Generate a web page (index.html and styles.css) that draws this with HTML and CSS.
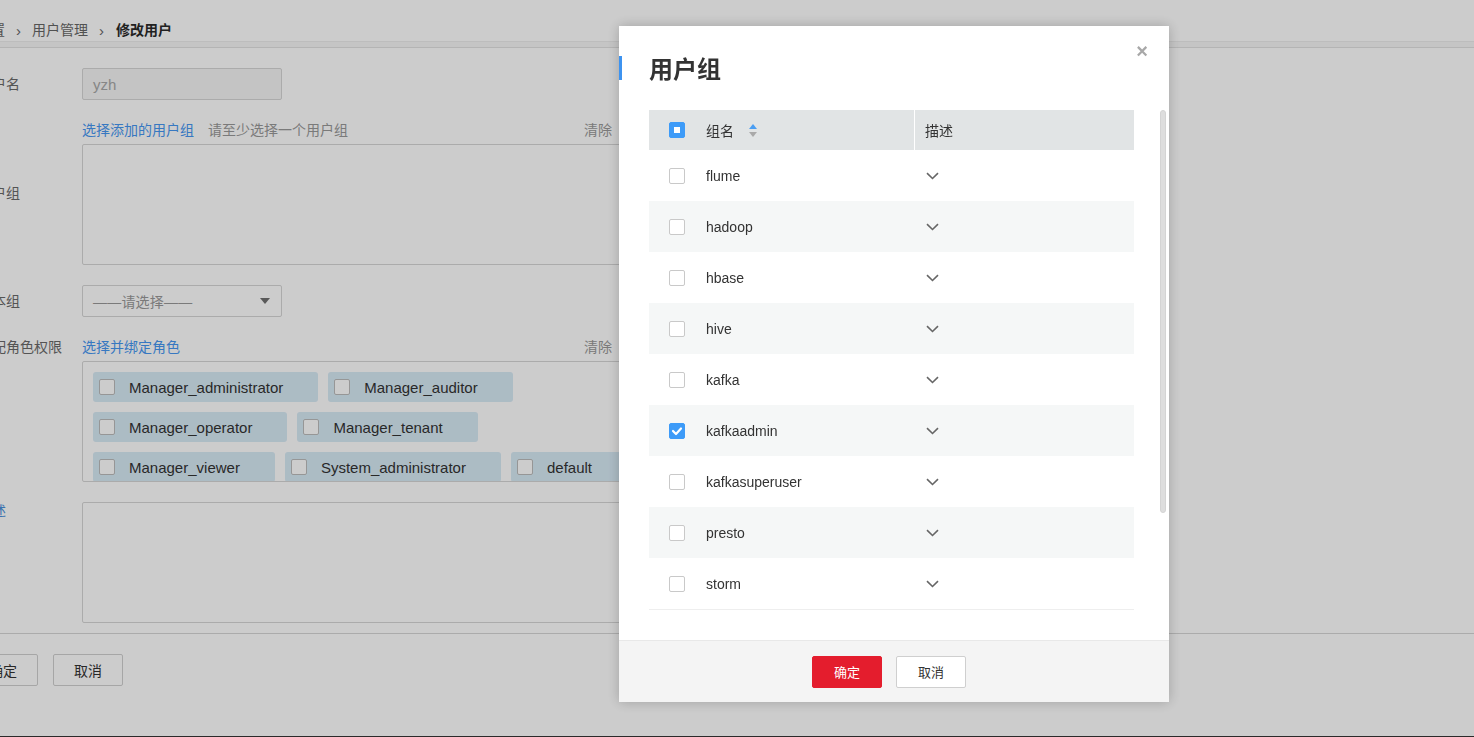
FILE: index.html
```html
<!DOCTYPE html>
<html lang="zh">
<head>
<meta charset="utf-8">
<title>修改用户</title>
<link rel="stylesheet" href="styles.css">
</head>
<body>
<div class="page">
  <div class="crumb">
    <span class="crumb-item first">系统设置</span>
    <span class="crumb-sep">›</span>
    <span class="crumb-item">用户管理</span>
    <span class="crumb-sep">›</span>
    <span class="crumb-item current">修改用户</span>
  </div>
  <div class="crumb-band"></div>

  <div class="form">
    <div class="row row-center">
      <div class="label">用户名</div>
      <div class="field"><div class="input disabled">yzh</div></div>
    </div>

    <div class="row row-center">
      <div class="label">用户组</div>
      <div class="field">
        <div class="field-head"><span class="link">选择添加的用户组</span><span class="hint">请至少选择一个用户组</span><span class="clear">清除</span></div>
        <div class="box"></div>
      </div>
    </div>

    <div class="row row-center">
      <div class="label">基本组</div>
      <div class="field"><div class="input select"><span class="hint">——请选择——</span><span class="caret"></span></div></div>
    </div>

    <div class="row">
      <div class="label">分配角色权限</div>
      <div class="field">
        <div class="field-head"><span class="link">选择并绑定角色</span><span class="clear">清除</span></div>
        <div class="box tags">
          <span class="tag"><span class="cb"></span>Manager_administrator</span>
          <span class="tag"><span class="cb"></span>Manager_auditor</span>
          <span class="tag"><span class="cb"></span>Manager_operator</span>
          <span class="tag"><span class="cb"></span>Manager_tenant</span>
          <span class="tag"><span class="cb"></span>Manager_viewer</span>
          <span class="tag"><span class="cb"></span>System_administrator</span>
          <span class="tag"><span class="cb"></span>default</span>
        </div>
      </div>
    </div>

    <div class="row row-desc">
      <div class="label label-link">描述</div>
      <div class="field"><div class="box"></div></div>
    </div>
  </div>
  <div class="divider"></div>
  <div class="actions">
    <span class="btn">确定</span>
    <span class="btn">取消</span>
  </div>
</div>

<div class="mask"></div>
<div class="bottom-line"></div>

<div class="modal">
  <div class="modal-head">
    <h2 class="modal-title">用户组</h2>
    <span class="modal-close">×</span>
  </div>
  <div class="modal-body">
    <table class="grid">
      <thead>
        <tr>
          <th class="col-name"><span class="name-cell"><span class="check indeterminate"></span>组名<span class="sort"><span class="up"></span><span class="down"></span></span></span></th>
          <th class="col-desc">描述</th>
        </tr>
      </thead>
      <tbody>
        <tr><td><span class="name-cell"><span class="check"></span>flume</span></td><td class="desc"><svg class="chev" width="13" height="8" viewBox="0 0 13 8"><polyline points="1,1.2 6.5,6.5 12,1.2"/></svg></td></tr>
        <tr><td><span class="name-cell"><span class="check"></span>hadoop</span></td><td class="desc"><svg class="chev" width="13" height="8" viewBox="0 0 13 8"><polyline points="1,1.2 6.5,6.5 12,1.2"/></svg></td></tr>
        <tr><td><span class="name-cell"><span class="check"></span>hbase</span></td><td class="desc"><svg class="chev" width="13" height="8" viewBox="0 0 13 8"><polyline points="1,1.2 6.5,6.5 12,1.2"/></svg></td></tr>
        <tr><td><span class="name-cell"><span class="check"></span>hive</span></td><td class="desc"><svg class="chev" width="13" height="8" viewBox="0 0 13 8"><polyline points="1,1.2 6.5,6.5 12,1.2"/></svg></td></tr>
        <tr><td><span class="name-cell"><span class="check"></span>kafka</span></td><td class="desc"><svg class="chev" width="13" height="8" viewBox="0 0 13 8"><polyline points="1,1.2 6.5,6.5 12,1.2"/></svg></td></tr>
        <tr><td><span class="name-cell"><span class="check checked"><svg width="12" height="10" viewBox="0 0 12 10"><polyline points="2,5 5,8 10,2.5"/></svg></span>kafkaadmin</span></td><td class="desc"><svg class="chev" width="13" height="8" viewBox="0 0 13 8"><polyline points="1,1.2 6.5,6.5 12,1.2"/></svg></td></tr>
        <tr><td><span class="name-cell"><span class="check"></span>kafkasuperuser</span></td><td class="desc"><svg class="chev" width="13" height="8" viewBox="0 0 13 8"><polyline points="1,1.2 6.5,6.5 12,1.2"/></svg></td></tr>
        <tr><td><span class="name-cell"><span class="check"></span>presto</span></td><td class="desc"><svg class="chev" width="13" height="8" viewBox="0 0 13 8"><polyline points="1,1.2 6.5,6.5 12,1.2"/></svg></td></tr>
        <tr class="last"><td><span class="name-cell"><span class="check"></span>storm</span></td><td class="desc"><svg class="chev" width="13" height="8" viewBox="0 0 13 8"><polyline points="1,1.2 6.5,6.5 12,1.2"/></svg></td></tr>
      </tbody>
    </table>
  </div>
  <div class="scrollbar"></div>
  <div class="modal-foot">
    <span class="mbtn primary">确定</span>
    <span class="mbtn">取消</span>
  </div>
</div>
</body>
</html>
```

FILE: styles.css
```css
html, body {
  margin: 0;
  padding: 0;
}
body {
  width: 1474px;
  height: 737px;
  overflow: hidden;
  background: #ffffff;
  font-family: "Liberation Sans", "Noto Sans CJK SC", sans-serif;
  font-size: 14px;
  color: #333;
  position: relative;
}

/* ---------- background page ---------- */
.page {
  width: 1474px;
}
.crumb {
  height: 21px;
  padding-top: 20px;
  display: flex;
  align-items: center;
  line-height: 21px;
  color: #666;
  white-space: nowrap;
}
.crumb-item.first {
  margin-left: -51px;
}
.crumb-sep {
  margin: 0 11px;
  color: #666;
  font-size: 15px;
}
.crumb-item.current {
  font-weight: bold;
  color: #2a2a2a;
  margin-left: 1px;
}
.crumb-band {
  height: 5px;
  background: #f7f7f7;
  border-top: 1px solid #ededed;
  border-bottom: 1px solid #e2e2e2;
}

.form {
  margin-left: -22px;
  padding-top: 20px;
  display: flex;
  flex-direction: column;
  gap: 20px;
}
.row {
  display: flex;
  align-items: flex-start;
}
.row-center {
  align-items: center;
}
.label {
  width: 104px;
  flex: none;
  line-height: 20px;
  color: #6a6a6a;
  white-space: nowrap;
}
.row-desc .label {
  margin-top: -1px;
}
.label-link {
  color: #4a8fdc;
}
.field {
  display: flex;
  flex-direction: column;
}
.input {
  box-sizing: border-box;
  width: 200px;
  height: 32px;
  border: 1px solid #d6d6d6;
  border-radius: 2px;
  padding: 0 10px;
  display: flex;
  align-items: center;
  background: #fff;
}
.input.disabled {
  background: #f5f5f5;
  color: #a8a8a8;
  font-size: 15px;
}
.input.select {
  justify-content: space-between;
}
.caret {
  width: 0;
  height: 0;
  border-left: 5px solid transparent;
  border-right: 5px solid transparent;
  border-top: 6px solid #707070;
  margin-right: 1px;
}
.field-head {
  width: 530px;
  height: 20px;
  line-height: 20px;
  margin-bottom: 4px;
  display: flex;
  padding-right: 10px;
}
.link {
  color: #4596f2;
}
.hint {
  color: #999;
  margin-left: 14px;
}
.input .hint {
  margin-left: 0;
  letter-spacing: 0.2px;
}
.clear {
  margin-left: auto;
  color: #999;
}
.box {
  box-sizing: border-box;
  width: 580px;
  height: 121px;
  border: 1px solid #d6d6d6;
  border-radius: 2px;
  background: #fff;
}
.box.tags {
  padding: 10px;
  display: flex;
  flex-wrap: wrap;
  align-content: flex-start;
  gap: 10px;
  overflow: hidden;
}
.tag {
  height: 30px;
  box-sizing: border-box;
  display: flex;
  align-items: center;
  padding: 0 35px 0 6px;
  background: #d8ebf6;
  border-radius: 3px;
  font-size: 15px;
  line-height: 18px;
  padding-top: 2px;
  color: #333;
  white-space: nowrap;
}
.cb {
  box-sizing: border-box;
  width: 16px;
  height: 16px;
  border: 1px solid #bcbcbc;
  border-radius: 2px;
  background: #fff;
  margin-right: 14px;
  margin-top: -2px;
}
.divider {
  margin-top: 10px;
  border-top: 1px solid #d6d6d6;
}
.actions {
  margin-top: 20px;
  margin-left: -32px;
  display: flex;
  gap: 15px;
}
.btn {
  box-sizing: border-box;
  width: 70px;
  height: 32px;
  border: 1px solid #d0d0d0;
  border-radius: 2px;
  background: #fff;
  display: flex;
  align-items: center;
  justify-content: center;
  color: #333;
}

/* ---------- mask ---------- */
.mask {
  position: fixed;
  inset: 0;
  background: rgba(0, 0, 0, 0.2);
}
.bottom-line {
  position: fixed;
  left: 0;
  right: 0;
  bottom: 0;
  height: 1px;
  background: #2a2a2a;
}

/* ---------- modal ---------- */
.modal {
  position: fixed;
  left: 619px;
  top: 26px;
  width: 550px;
  height: 676px;
  background: #fff;
  box-shadow: 0 0 12px rgba(0, 0, 0, 0.22);
  display: flex;
  flex-direction: column;
}
.modal-head {
  position: relative;
  padding: 30px 30px 0 30px;
  height: 24px;
}
.modal-head::before {
  content: "";
  position: absolute;
  left: 0;
  top: 30px;
  width: 3px;
  height: 24px;
  background: #3d93f0;
}
.modal-title {
  margin: 0;
  font-size: 24px;
  line-height: 24px;
  font-weight: 600;
  color: #333;
  font-family: "Noto Sans CJK SC", sans-serif;
}
.modal-close {
  position: absolute;
  right: 21px;
  top: 13px;
  font-size: 20px;
  line-height: 24px;
  color: #a8a8a8;
  font-weight: bold;
}
.modal-body {
  margin-top: 30px;
  height: 529px;
  padding: 0 35px 0 30px;
  overflow: hidden;
}
.grid {
  width: 485px;
  border-collapse: collapse;
  table-layout: fixed;
}
.grid th {
  height: 40px;
  background: #e1e4e5;
  font-weight: normal;
  text-align: left;
  padding: 0;
  color: #333;
}
.grid th.col-name {
  width: 265px;
  border-right: 1px solid #fff;
}
.grid th.col-desc {
  padding-left: 10px;
}
.grid td {
  height: 51px;
  padding: 0;
  color: #333;
}
.grid tbody tr:nth-child(even) td {
  background: #f5f7f7;
}
.grid tr.last td {
  border-bottom: 1px solid #eeeeee;
}
.grid td.desc {
  padding-left: 11px;
}
.name-cell {
  display: flex;
  align-items: center;
  padding-left: 20px;
}
.check {
  box-sizing: border-box;
  width: 16px;
  height: 16px;
  border: 1px solid #c9c9c9;
  border-radius: 2px;
  background: #fff;
  margin-right: 21px;
  display: flex;
  align-items: center;
  justify-content: center;
  flex: none;
}
.check.checked,
.check.indeterminate {
  background: #3d9bf8;
  border-color: #3d9bf8;
}
.check.indeterminate::after {
  content: "";
  width: 6px;
  height: 6px;
  background: #fff;
}
.check svg polyline {
  fill: none;
  stroke: #fff;
  stroke-width: 2.2;
  stroke-linecap: round;
  stroke-linejoin: round;
}
.sort {
  display: flex;
  flex-direction: column;
  gap: 3px;
  margin-left: 15px;
}
.sort .up {
  width: 0;
  height: 0;
  border-left: 4px solid transparent;
  border-right: 4px solid transparent;
  border-bottom: 5px solid #4a9ef3;
}
.sort .down {
  width: 0;
  height: 0;
  border-left: 4px solid transparent;
  border-right: 4px solid transparent;
  border-top: 5px solid #a9a9a9;
}
.chev {
  display: block;
}
.chev polyline {
  fill: none;
  stroke: #666;
  stroke-width: 1.6;
}
.scrollbar {
  position: absolute;
  left: 541px;
  top: 84px;
  width: 6px;
  height: 403px;
  box-sizing: border-box;
  border-radius: 3px;
  background: #dedede;
  border: 1px solid #d4d4d4;
}
.modal-foot {
  margin-top: auto;
  height: 61px;
  border-top: 1px solid #e8e8e8;
  background: #f4f4f4;
  display: flex;
  align-items: center;
  justify-content: center;
  gap: 14px;
  padding-right: 10px;
}
.mbtn {
  box-sizing: border-box;
  width: 70px;
  height: 32px;
  border: 1px solid #cfcfcf;
  border-radius: 2px;
  background: #fff;
  display: flex;
  align-items: center;
  justify-content: center;
  color: #333;
  font-size: 13px;
}
.mbtn.primary {
  background: #e41d2d;
  border-color: #e41d2d;
  color: #fff;
}
```
